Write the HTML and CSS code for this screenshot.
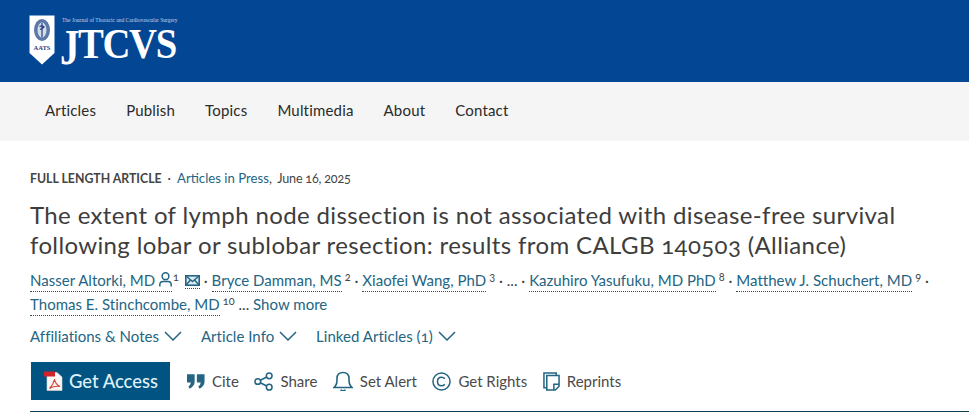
FILE: index.html
```html
<!DOCTYPE html>
<html lang="en">
<head>
<meta charset="utf-8">
<title>JTCVS article</title>
<link rel="stylesheet" href="styles.css">
</head>
<body>
<header class="brand">
  <svg class="shield" width="26" height="50" viewBox="0 0 26 50">
    <path d="M0.500 0.500H25.500V38L13 49.500L0.500 38Z" fill="#fff"/>
    <ellipse cx="13" cy="15" rx="8" ry="11" fill="#5d78a8"/>
    <ellipse cx="13" cy="15" rx="4.500" ry="7.500" fill="#d4dcea"/>
    <path d="M13 8V22M10.500 11.500Q13 10 15 12Q13 14 11 14.500" stroke="#24427f" stroke-width="1.200" fill="none"/>
    <text x="13" y="35" class="aats">AATS</text>
  </svg>
  <div class="wordmark">
    <div class="journal">The Journal of Thoracic and Cardiovascular Surgery</div>
    <div class="jtcvs"><span class="j">J</span>TCVS</div>
  </div>
</header>
<nav class="mainnav">
  <a>Articles</a><a>Publish</a><a>Topics</a><a>Multimedia</a><a>About</a><a>Contact</a>
</nav>
<main class="article">
  <div class="meta"><b>FULL LENGTH ARTICLE</b><span class="dot">·</span><a class="plain">Articles in Press</a>, <span class="date">June 16, 2025</span></div>
  <h1>The extent of lymph node dissection is not associated with disease-free survival following lobar or sublobar resection: results from CALGB 140503 (Alliance)</h1>
  <div class="authors">
    <div class="aline">
      <a class="au">Nasser Altorki, MD <svg class="person" width="13" height="15" viewBox="0 0 13 15"><circle cx="6.500" cy="4.200" r="3.400" fill="none" stroke="#246583" stroke-width="1.500"/><path d="M0.800 14.500V13Q0.800 9.500 4 9.500H9Q12.200 9.500 12.200 13V14.500" fill="none" stroke="#246583" stroke-width="1.500"/></svg></a><sup class="tight">1</sup>
      <a class="au mail"><svg width="15" height="11" viewBox="0 0 15 11"><rect x="0.800" y="0.800" width="13.400" height="9.400" fill="#dcebf3" stroke="#246583" stroke-width="1.600"/><path d="M1 1L7.500 6.500L14 1M1 10L5.500 5M14 10L9.500 5" fill="none" stroke="#246583" stroke-width="1.500"/></svg></a>
      <span class="sep">·</span>
      <a class="au">Bryce Damman, MS</a><sup>2</sup>
      <span class="sep">·</span>
      <a class="au">Xiaofei Wang, PhD</a><sup>3</sup>
      <span class="sep">·</span>
      <span>...</span>
      <span class="sep">·</span>
      <a class="au">Kazuhiro Yasufuku, MD PhD</a><sup>8</sup>
      <span class="sep">·</span>
      <a class="au">Matthew J. Schuchert, MD</a><sup>9</sup>
      <span class="sep">·</span>
    </div>
    <div class="aline">
      <a class="au">Thomas E. Stinchcombe, MD</a><sup>10</sup>
      <span>...</span> <a class="plain">Show more</a>
    </div>
  </div>
  <div class="drawers">
    <a>Affiliations &amp; Notes <svg class="chev" width="18" height="10" viewBox="0 0 18 10"><path d="M1 1L9 9L17 1"/></svg></a>
    <a>Article Info <svg class="chev" width="18" height="10" viewBox="0 0 18 10"><path d="M1 1L9 9L17 1"/></svg></a>
    <a>Linked Articles (1) <svg class="chev" width="18" height="10" viewBox="0 0 18 10"><path d="M1 1L9 9L17 1"/></svg></a>
  </div>
  <div class="tools">
    <a class="access">
      <svg width="19" height="20" viewBox="0 0 19 20">
        <path d="M3 1.500H13L18 6V19.500H3Z" fill="#fbf7f3" stroke="#d9d4d0" stroke-width="0.600"/>
        <rect x="0" y="0.500" width="11" height="5" rx="0.500" fill="#d2232a"/>
        <path d="M5.500 17.500Q9.500 13.500 10.500 8Q11 13 16 15.500Q10.500 14.500 5.500 17.500Z" fill="none" stroke="#d2453f" stroke-width="1.100"/>
      </svg>
      Get Access
    </a>
    <a class="tool"><svg width="18" height="15" viewBox="0 0 20 16"><path class="fill" d="M0 0H8.500V8Q8.500 13 3 16L1.500 13.500Q4 12 4.300 9H0ZM11 0H19.500V8Q19.500 13 14 16L12.500 13.500Q15 12 15.300 9H11Z"/></svg>Cite</a>
    <a class="tool"><svg width="19" height="19" viewBox="0 0 20 20"><g class="line"><circle cx="4" cy="10" r="3"/><circle cx="16" cy="4" r="3"/><circle cx="16" cy="16" r="3"/><path d="M6.700 8.700L13.300 5.300M6.700 11.300L13.300 14.700"/></g></svg>Share</a>
    <a class="tool"><svg width="20" height="20" viewBox="0 0 20 20"><g class="line"><path d="M1 16.500Q4 14 4 9V7.500Q4 1.500 10 1.500Q16 1.500 16 7.500V9Q16 14 19 16.500Z"/><path d="M7.500 19Q10 20.500 12.500 19"/></g></svg>Set Alert</a>
    <a class="tool"><svg width="19" height="19" viewBox="0 0 20 20"><g class="line"><circle cx="10" cy="10" r="9"/><path d="M13.500 7Q12 5.500 10 5.500Q5.800 5.500 5.800 10Q5.800 14.500 10 14.500Q12 14.500 13.500 13"/></g></svg>Get Rights</a>
    <a class="tool"><svg width="17" height="19" viewBox="0 0 18 20"><g class="line"><path d="M3.500 16.500H1V1H14V3.500"/><path d="M4 3.700H17V15L13 19H4Z"/><path d="M17 13H11.500V19"/></g></svg>Reprints</a>
  </div>
</main>
</body>
</html>
```

FILE: styles.css
```css
html, body { margin: 0; padding: 0; }
body { width: 969px; height: 412px; overflow: hidden; background: #fff; font-family: Lato, "Open Sans", sans-serif; font-variant-numeric: oldstyle-nums; color: #3c3c3c; }
a { color: #246583; text-decoration: none; }

.brand { height: 82px; box-sizing: border-box; background: #034694; display: flex; align-items: flex-start; padding: 15px 0 0 29px; gap: 5px; }
.shield { display: block; flex: none; }
.aats { font: bold 6.500px "Liberation Serif", serif; fill: #24427f; text-anchor: middle; }
.wordmark { display: flex; flex-direction: column; }
.journal { font: 5.500px/7px "Liberation Serif", serif; color: #c7d5ea; margin: 2px 0 0 2px; white-space: nowrap; }
.jtcvs { font: bold 43px/36px "Liberation Serif", serif; color: #fff; letter-spacing: -1.500px; margin-top: 2px; transform: scaleX(0.9); transform-origin: left top; white-space: nowrap; }
.j { display: inline-block; transform: scaleY(1.2); transform-origin: center top; }

.mainnav { height: 59px; background: #f5f5f5; display: flex; align-items: center; padding: 0 0 3px 45px; box-sizing: border-box; gap: 30px; font-size: 15px; }
.mainnav a { color: #2a2a2a; letter-spacing: 0.180px; }

.article { padding: 29px 0 0 30px; }
.meta { font-size: 13.200px; line-height: 16px; color: #444; }
.meta b { font-weight: 700; font-size: 12.300px; }
.date { font-size: 12.600px; letter-spacing: -0.200px; margin-left: 2px; }
.dot { margin: 0 6px; }
.plain { color: #246583; }
h1 { margin: 13px 0 0; width: 900px; font-size: 24px; line-height: 30px; font-weight: 400; color: #3d3d3d; letter-spacing: 0.370px; }

.authors { margin-top: 8px; font-size: 15px; line-height: 24px; width: 930px; letter-spacing: 0.020px; }
.aline { white-space: nowrap; height: 24px; }
.au { border-bottom: 1px dotted #1f4f6a; padding-bottom: 2px; }
.mail { display: inline-block; line-height: 11px; margin-left: 2px; }
.person { vertical-align: -1px; }
sup { font-size: 11px; line-height: 0; vertical-align: 5px; color: #444; margin-left: 3px; }
.tight { margin-left: 1px; }
.drawers { margin-top: 8px; display: flex; gap: 19px; font-size: 15px; line-height: 24px; letter-spacing: 0.030px; }
.chev { margin-left: 1px; vertical-align: 1px; }
.chev path { fill: none; stroke: #246583; stroke-width: 1.500; }

.tools { margin-top: 14px; display: flex; align-items: center; gap: 15.500px; width: 939px; height: 49px; border-bottom: 1px solid #0e4058; }
.access { width: 139px; height: 38px; box-sizing: border-box; margin: 0 1.500px 11px 1px; padding-left: 13px; background: #015482; color: #dff0f7; font-size: 18.400px; font-weight: 500; display: flex; align-items: center; gap: 6px; }
.tool { display: flex; align-items: center; gap: 7px; font-size: 15px; color: #4a4a4a; margin-bottom: 11px; }
.fill { fill: #246583; }
.line { fill: none; stroke: #246583; stroke-width: 1.600; }
```
